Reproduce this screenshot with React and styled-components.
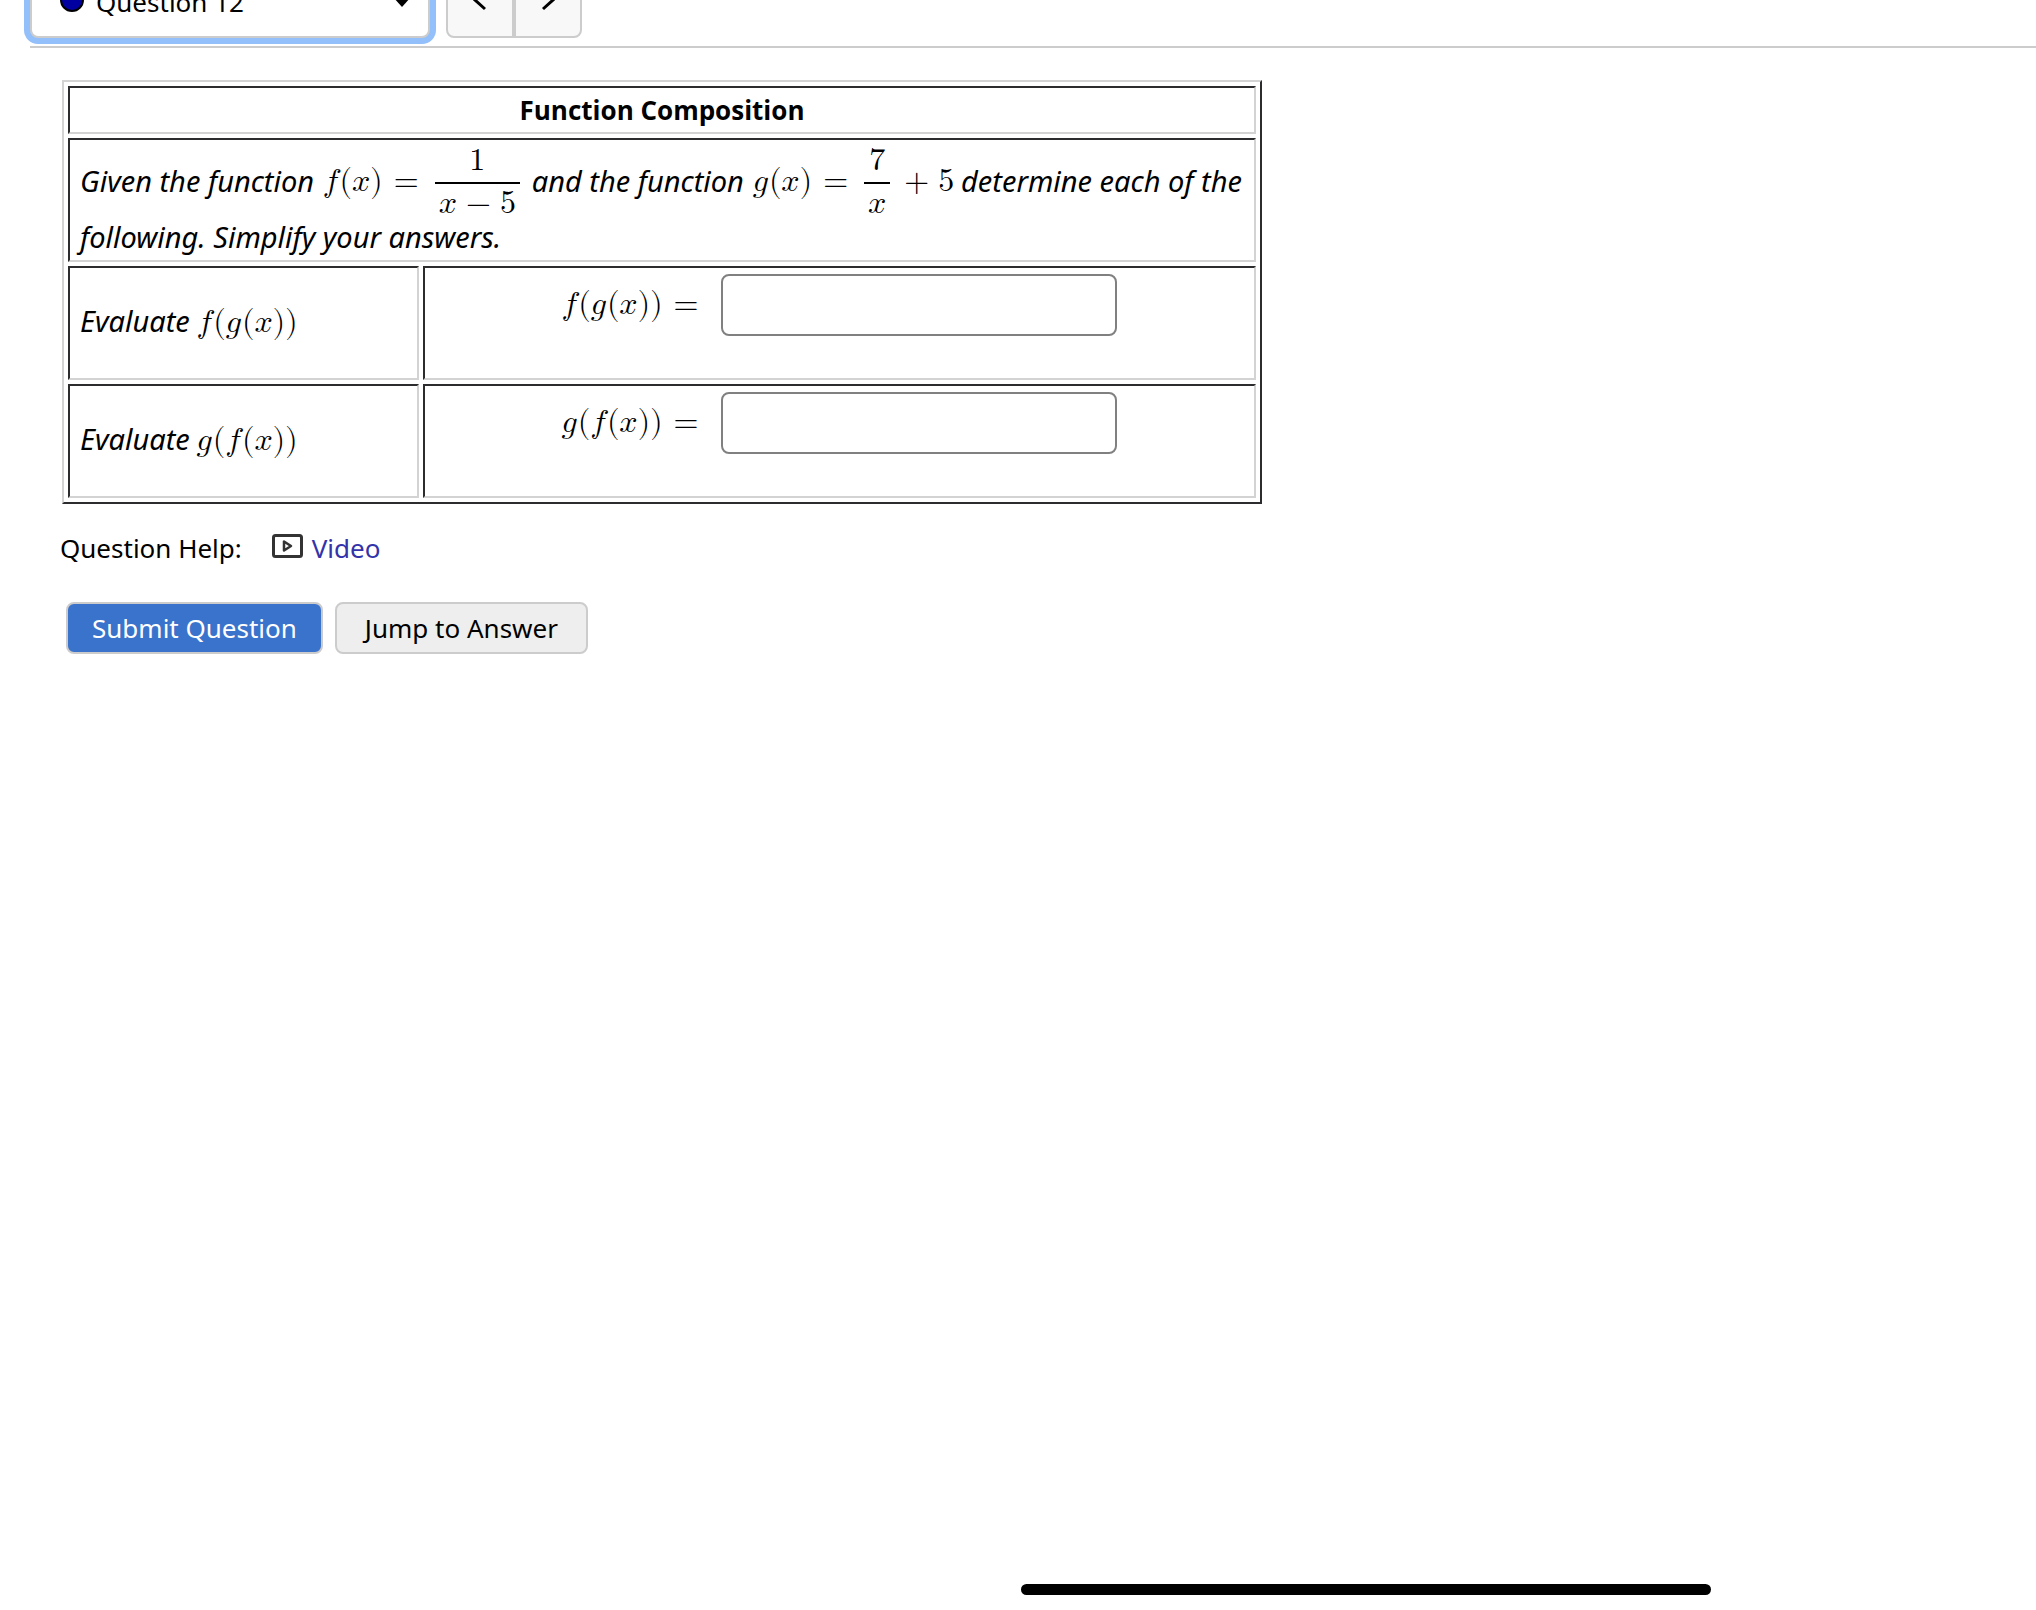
import styled, { createGlobalStyle } from "styled-components";

const questions = ["Question 12"];

const Open = () => <mo form="prefix" stretchy="false" lspace="1px">(</mo>;
const Close = () => <mo form="postfix" stretchy="false">)</mo>;
const Equals = () => <mo lspace="11px" rspace="11px">=</mo>;
const Binary = ({ children }) => <mo lspace="9px" rspace="9px">{children}</mo>;

// name(argument), e.g. f(x) or f(g(x))
function Call({ name, children }) {
	return (
		<mrow>
			<mi>{name}</mi>
			<Open />
			{children}
			<Close />
		</mrow>
	);
}

const X = () => <mi>x</mi>;

function AnswerRow({ id, outer, inner }) {
	const expression = (
		<Call name={outer}>
			<Call name={inner}>
				<X />
			</Call>
		</Call>
	);

	return (
		<tr>
			<PromptCell>
				<Prose>Evaluate</Prose> <Formula>{expression}</Formula>
			</PromptCell>
			<AnswerCell>
				<AnswerLine>
					<AnswerLabel htmlFor={id}>
						<Formula>
							{expression}
							<Equals />
						</Formula>
					</AnswerLabel>
					<AnswerInput id={id} type="text" autoComplete="off" />
				</AnswerLine>
			</AnswerCell>
		</tr>
	);
}

function App() {
	return (
		<Page>
			<GlobalStyle />
			<Header>
				<Picker>
					<StatusDot viewBox="0 0 24 24" aria-hidden="true">
						<circle cx="12" cy="12" r="11" fill="#0000a0" stroke="#000" strokeWidth="2" />
					</StatusDot>
					<QuestionSelect aria-label="Question">
						{questions.map((question) => (
							<option key={question}>{question}</option>
						))}
					</QuestionSelect>
					<Caret viewBox="0 0 18 10" aria-hidden="true">
						<path d="M0 0h18L9 10z" />
					</Caret>
				</Picker>
				<NavGroup>
					<NavButton aria-label="Previous question">
						<svg width="14" height="22" viewBox="0 0 14 22">
							<path d="M12 1 2 11l10 9" />
						</svg>
					</NavButton>
					<NavButton aria-label="Next question">
						<svg width="14" height="22" viewBox="0 0 14 22">
							<path d="m2 1 10 10-10 9" />
						</svg>
					</NavButton>
				</NavGroup>
			</Header>
			<Main>
				<ProblemTable>
					<tbody>
						<tr>
							<TitleCell colSpan={2}>Function Composition</TitleCell>
						</tr>
						<tr>
							<StatementCell colSpan={2}>
								<Prose>Given the function</Prose>{" "}
								<Formula>
									<Call name="f">
										<X />
									</Call>
									<Equals />
									<Fraction linethickness="2px">
										<mn>1</mn>
										<mrow>
											<X />
											<Binary>−</Binary>
											<mn>5</mn>
										</mrow>
									</Fraction>
								</Formula>{" "}
								<Prose>and the function</Prose>{" "}
								<Formula>
									<Call name="g">
										<X />
									</Call>
									<Equals />
									<Fraction linethickness="2px">
										<mn>7</mn>
										<X />
									</Fraction>
									<Binary>+</Binary>
									<mn>5</mn>
								</Formula>{" "}
								<Prose>determine each of the following. Simplify your answers.</Prose>
							</StatementCell>
						</tr>
						<AnswerRow id="answer-fg" outer="f" inner="g" />
						<AnswerRow id="answer-gf" outer="g" inner="f" />
					</tbody>
				</ProblemTable>
				<Help>
					<span>Question Help:</span>
					<HelpLink href="#video">
						<svg width="32" height="24" viewBox="0 0 32 24" fill="none" stroke="#333" aria-hidden="true">
							<rect x="1.5" y="1.5" width="28" height="21" rx="2" strokeWidth="3" />
							<path d="M12 7.500v9l7-4.500z" strokeWidth="2.500" strokeLinejoin="round" />
						</svg>
						Video
					</HelpLink>
				</Help>
				<Actions>
					<ActionButton $primary>Submit Question</ActionButton>
					<ActionButton>Jump to Answer</ActionButton>
				</Actions>
			</Main>
			<HomeIndicator />
		</Page>
	);
}

const GlobalStyle = createGlobalStyle`
	* {
		box-sizing: border-box;
	}
	body {
		margin: 0;
		background: #fff;
		color: #000;
		font: 26px/36px "Trebuchet MS", "Noto Sans", sans-serif;
	}
	button, input, select {
		font: inherit;
		color: inherit;
	}
`;

const Page = styled.div`
	min-height: 100vh;
`;

const Header = styled.header`
	display: flex;
	align-items: flex-end;
	gap: 16px;
	height: 46px;
	padding: 0 0 8px 30px;
	overflow: hidden;
`;

const Picker = styled.div`
	position: relative;
	flex: none;
	width: 400px;
	height: 76px;
`;

const QuestionSelect = styled.select`
	appearance: none;
	width: 100%;
	height: 100%;
	padding: 4px 60px 0 64px;
	border: 2px solid #ccc;
	border-radius: 8px;
	background: #fff;
	outline: none;
	box-shadow: 0 0 0 6px #93bffa;
`;

const StatusDot = styled.svg`
	position: absolute;
	left: 30px;
	top: 26px;
	width: 24px;
	height: 24px;
	pointer-events: none;
`;

const Caret = styled.svg`
	position: absolute;
	right: 19px;
	top: 35px;
	width: 18px;
	height: 10px;
	pointer-events: none;
`;

const NavGroup = styled.div`
	display: flex;
	flex: none;
	height: 76px;
`;

const NavButton = styled.button`
	display: flex;
	align-items: center;
	justify-content: center;
	width: 68px;
	padding: 0;
	border: 2px solid #ccc;
	background: #f8f8f8;

	&:first-child {
		border-radius: 0 0 0 8px;
	}
	&:last-child {
		border-radius: 0 0 8px 0;
	}
	path {
		fill: none;
		stroke: #000;
		stroke-width: 3;
	}
`;

const Main = styled.main`
	margin-left: 30px;
	padding: 32px 30px;
	border-top: 2px solid #ccc;
`;

const ProblemTable = styled.table`
	width: 1200px;
	max-width: 100%;
	margin-left: 2px;
	border: 2px solid;
	border-color: #d3d3d3 #2c2c2e #2c2c2e #d3d3d3;
	border-spacing: 4px;

	td, th {
		padding: 4px 10px;
		border: 2px solid;
		border-color: #2c2c2e #d3d3d3 #d3d3d3 #2c2c2e;
	}
`;

const TitleCell = styled.th`
	height: 48px;
	font-family: "Trebuchet MS", "Open Sans", sans-serif;
`;

const StatementCell = styled.td`
	height: 124px;
	line-height: 28px;

	math {
		margin-left: 2px;
	}
`;

const PromptCell = styled.td`
	width: 351px;
	height: 114px;
	line-height: 28px;
`;

const AnswerCell = styled.td`
	vertical-align: top;
`;

const AnswerLine = styled.div`
	display: flex;
	align-items: center;
	justify-content: center;
	gap: 12px;
	padding-top: 2px;
`;

const AnswerLabel = styled.label`
	padding-bottom: 2px;
`;

const AnswerInput = styled.input`
	width: 396px;
	height: 62px;
	padding: 0 12px;
	border: 2px solid #808080;
	border-radius: 8px;
	background: #fff;
`;

const Prose = styled.em`
	font-size: 29px;
`;

const Formula = styled("math")`
	font: 32px/32px "Latin Modern Math", "Liberation Serif", serif;
	math-style: normal;
`;

const Fraction = styled("mfrac")`
	margin: 0 4px;

	> :first-child {
		padding-bottom: 2px;
	}
	> :last-child {
		padding: 0 4px 10px;
	}
`;

const Help = styled.div`
	display: flex;
	align-items: center;
	gap: 30px;
	margin-top: 26px;
`;

const HelpLink = styled.a`
	display: flex;
	align-items: center;
	gap: 8px;
	color: #3333aa;
	text-decoration: none;

	svg {
		margin-bottom: 4px;
	}
`;

const Actions = styled.div`
	display: flex;
	gap: 12px;
	margin: 36px 0 0 6px;
`;

const ActionButton = styled.button`
	min-width: 253px;
	height: 52px;
	padding: 0 24px;
	border: 2px solid #ccc;
	border-radius: 8px;
	background: ${({ $primary }) => ($primary ? "#3a73cc" : "#eee")};
	color: ${({ $primary }) => ($primary ? "#fff" : "#000")};
`;

const HomeIndicator = styled.div`
	position: fixed;
	right: 325px;
	bottom: 15px;
	width: 690px;
	height: 11px;
	border-radius: 6px;
	background: #000;
`;

export default App;
